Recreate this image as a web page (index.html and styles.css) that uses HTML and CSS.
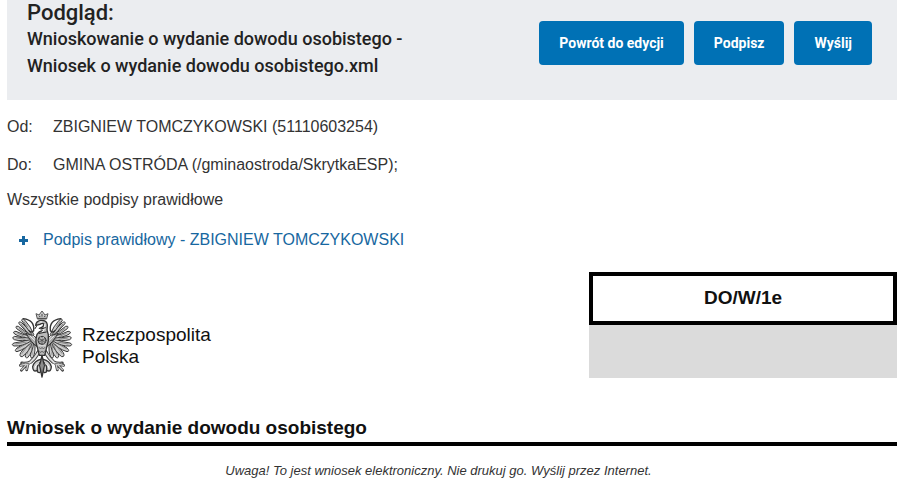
FILE: index.html
```html
<!DOCTYPE html>
<html lang="pl">
<head>
<meta charset="utf-8">
<title>Podgląd wniosku</title>
<link rel="stylesheet" href="styles.css">
</head>
<body>
<main class="page">
  <header class="preview">
    <div class="preview-titles">
      <h1>Podgląd:</h1>
      <p>Wnioskowanie o wydanie dowodu osobistego - Wniosek o wydanie dowodu osobistego.xml</p>
    </div>
    <div class="actions">
      <button type="button">Powrót do edycji</button>
      <button type="button">Podpisz</button>
      <button type="button">Wyślij</button>
    </div>
  </header>

  <section class="meta">
    <dl>
      <dt>Od:</dt><dd>ZBIGNIEW TOMCZYKOWSKI (51110603254)</dd>
      <dt>Do:</dt><dd>GMINA OSTRÓDA (/gminaostroda/SkrytkaESP);</dd>
    </dl>
    <p>Wszystkie podpisy prawidłowe</p>
    <a class="signature" href="#">
      <svg width="9" height="9" viewBox="0 0 9 9" aria-hidden="true"><path d="M3 0h3v3h3v3H6v3H3V6H0V3h3z" fill="currentColor"/></svg>
      <span>Podpis prawidłowy - ZBIGNIEW TOMCZYKOWSKI</span>
    </a>
  </section>

  <section class="form-head">
    <div class="state">
      <svg class="eagle" viewBox="30 29 192 210" aria-hidden="true">
        <defs>
          <g id="side">
            <g fill="#ccc" stroke="#3a3a3a" stroke-width="3">
              <path d="M104 134Q108 160 99 178Q91 182 91 169Q92 150 101 132z"/>
              <path d="M101 132Q99 160 83 178Q73 181 77 165Q84 145 98 130z"/>
              <path d="M98 131Q89 159 67 175Q56 176 62 163Q75 143 95 128z"/>
              <path d="M96 130Q78 152 51 160Q41 159 51 149Q69 137 93 125z"/>
              <path d="M95 127Q68 145 42 143Q32 139 42 134Q65 132 93 121z"/>
              <path d="M95 124Q64 130 43 124Q33 118 44 114Q66 121 94 117z"/>
              <path d="M95 120Q61 118 44 107Q36 99 48 99Q66 109 94 114z"/>
              <path d="M96 117Q66 106 50 91Q44 82 55 84Q74 100 96 111z"/>
              <path d="M97 115Q71 93 57 76Q55 67 65 73Q84 91 99 110z"/>
              <path d="M98 112Q76 84 65 66Q66 58 75 66Q92 84 101 108z"/>
            </g>
            <path d="M95 140L96 168M91 139L81 167M86 138L66 165M83 134L53 151M79 131L48 137M75 123L50 119M73 114L53 105M75 104L58 91M76 94L64 78M83 86L72 70" stroke="#666" stroke-width="2"/>
            <path d="M70 61Q105 66 101 97Q93 105 87 97" stroke="#333" stroke-width="4"/>
            <path d="M78 105Q101 109 115 123L112 145Q94 134 78 105z" fill="#aaa" stroke="#333" stroke-width="3"/>
            <path d="M91 114l13 12M99 113l10 12" stroke="#eee" stroke-width="3"/>
            <path d="M116 160Q106 180 92 191Q79 198 66 195" stroke="#444" stroke-width="11"/>
            <path d="M116 161Q104 181 91 192Q79 198 68 196" stroke="#ddd" stroke-width="6"/>
            <path d="M78 197L61 201M80 198L64 216M84 197L80 215" stroke="#444" stroke-width="8"/>
            <path d="M78 197L62 201M80 198L65 214M84 197L80 213" stroke="#ccc" stroke-width="4"/>
            <path d="M122 183Q103 187 98 205Q99 222 110 217M122 191Q108 202 113 221Q121 226 124 216" fill="#ccc" stroke="#333" stroke-width="4"/>
            <path d="M116 196Q105 200 105 210" stroke="#fff" stroke-width="3"/>
          </g>
        </defs>
        <g fill="none" stroke-linecap="round" stroke-linejoin="round">
          <use href="#side"/>
          <use href="#side" transform="matrix(-1 0 0 1 252 0)"/>
          <path d="M118 90Q132 86 131 77Q128 73 120 78L107 81Q108 68 122 66Q141 65 142 80Q139 93 145 109Q147 130 140 147L134 171H118L112 147Q104 130 111 108Q117 99 127 97" fill="#bbb" stroke="#333" stroke-width="4"/>
          <path d="M120 71h6M135 78Q137 92 126 103" stroke="#fff" stroke-width="3"/>
          <path d="M110 83L105 91M123 92L136 88M118 105L139 101" stroke="#222" stroke-width="3"/>
          <circle cx="126" cy="126" r="12" fill="#aaa" stroke="#333" stroke-width="3"/>
          <path d="M116 120l20 12M116 132l20-12M126 115v22M117 147l5 5 4-5 4 5 5-5M118 158l4 5 4-5 4 5 4-5" stroke="#444" stroke-width="2"/>
          <path d="M121 116l5 5 5-5M116 142h20" stroke="#eee" stroke-width="2"/>
          <path d="M126 171L119 202L126 236L133 202z" fill="#bbb" stroke="#333" stroke-width="4"/>
          <path d="M126 174v56" stroke="#333" stroke-width="2"/>
          <path d="M112 61L108 46L117 50L126 38L135 50L144 46L140 61z" fill="#ccc" stroke="#555" stroke-width="3"/>
          <path d="M114 60h24M118 54h2M126 48v6M133 54h2" stroke="#444" stroke-width="3"/>
        </g>
      </svg>
      <p>Rzeczpospolita<br>Polska</p>
    </div>
    <div class="form-code">
      <strong>DO/W/1e</strong>
      <div class="form-slot"></div>
    </div>
  </section>

  <h2>Wniosek o wydanie dowodu osobistego</h2>
  <p class="notice">Uwaga! To jest wniosek elektroniczny. Nie drukuj go. Wyślij przez Internet.</p>
</main>
</body>
</html>
```
FILE: styles.css
```css
* {
  box-sizing: border-box;
}

body {
  margin: 0;
  background: #fff;
  color: #333;
  font: 16px/20px "Liberation Sans", Arial, sans-serif;
}

h1, h2, p, dl, dd {
  margin: 0;
}

.page {
  margin: 0 25px 0 7px;
}

.preview {
  display: flex;
  justify-content: space-between;
  align-items: flex-start;
  padding: 0 25px 21px 20px;
  background: #ebedf0;
  color: #222;
  font-family: Roboto, sans-serif;
}

.preview-titles {
  flex: 0 1 400px;
}

.preview h1 {
  font-size: 22px;
  font-weight: 500;
  line-height: 25px;
}

.preview p {
  font-size: 18px;
  font-weight: 500;
  line-height: 27px;
}

.actions {
  display: flex;
  gap: 10px;
  padding-top: 21px;
}

.actions button {
  height: 44px;
  padding: 0 20px;
  border: 0;
  border-radius: 4px;
  background: #0071b5;
  color: #fff;
  font: 700 14px/20px Roboto, sans-serif;
}

.meta {
  padding-top: 17px;
}

.meta dl {
  display: grid;
  grid-template-columns: 36px 1fr;
  gap: 18px 10px;
  padding-bottom: 15px;
}

.signature {
  display: flex;
  align-items: center;
  gap: 15px;
  padding: 20px 0 0 12px;
  color: #1767a0;
  text-decoration: none;
}

.form-head {
  display: flex;
  justify-content: space-between;
  align-items: flex-end;
  padding-top: 22px;
  color: #111;
}

.state {
  display: flex;
  align-items: flex-end;
  gap: 8px;
  padding-left: 3px;
  font-size: 19px;
  line-height: 22px;
}

.state p {
  padding-bottom: 10px;
}

.eagle {
  width: 64px;
  height: 70px;
}

.form-code {
  flex: 0 1 308px;
}

.form-code strong {
  display: block;
  padding: 11px 0 12px;
  border: 4px solid #000;
  font-size: 19px;
  line-height: 22px;
  text-align: center;
}

.form-slot {
  height: 53px;
  background: #dbdbdb;
}

h2 {
  padding: 38px 0 2px;
  border-bottom: 4px solid #000;
  color: #111;
  font-size: 19px;
  line-height: 24px;
}

.notice {
  padding: 15px 27px 0 0;
  font-size: 13px;
  font-style: italic;
  text-align: center;
}
```
